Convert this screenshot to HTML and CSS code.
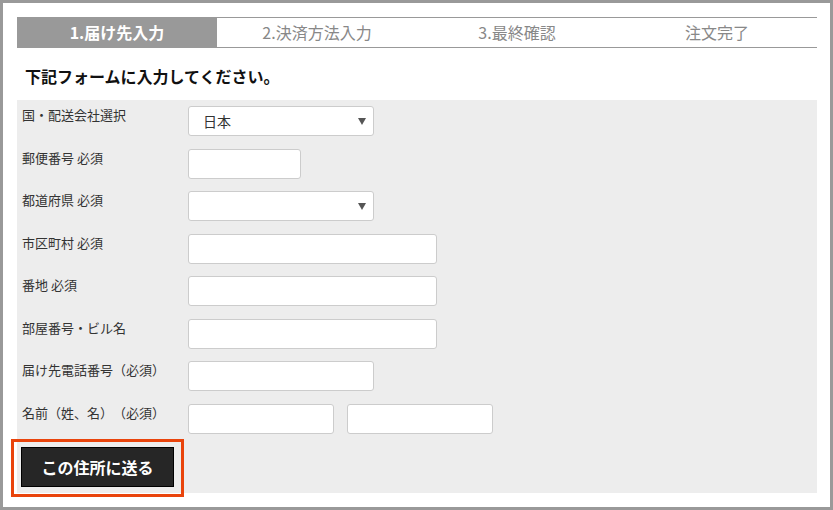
FILE: index.html
```html
<!DOCTYPE html>
<html lang="ja">
<head>
<meta charset="utf-8">
<title>届け先入力</title>
<link rel="stylesheet" href="styles.css">
</head>
<body>
<div class="frame">
  <ol class="steps">
    <li class="step is-active">1.届け先入力</li>
    <li class="step">2.決済方法入力</li>
    <li class="step">3.最終確認</li>
    <li class="step">注文完了</li>
  </ol>
  <h2 class="lead">下記フォームに入力してください。</h2>
  <form class="form">
    <div class="row">
      <label class="label">国・配送会社選択</label>
      <div class="field select w-186"><span class="value">日本</span><svg class="arrow" width="8" height="7" viewBox="0 0 8 7"><path d="M0 0H8L4 7Z" fill="#555"/></svg></div>
    </div>
    <div class="row">
      <label class="label">郵便番号 必須</label>
      <div class="field w-113"></div>
    </div>
    <div class="row">
      <label class="label">都道府県 必須</label>
      <div class="field select w-186"><span class="value"></span><svg class="arrow" width="8" height="7" viewBox="0 0 8 7"><path d="M0 0H8L4 7Z" fill="#555"/></svg></div>
    </div>
    <div class="row">
      <label class="label">市区町村 必須</label>
      <div class="field w-249"></div>
    </div>
    <div class="row">
      <label class="label">番地 必須</label>
      <div class="field w-249"></div>
    </div>
    <div class="row">
      <label class="label">部屋番号・ビル名</label>
      <div class="field w-249"></div>
    </div>
    <div class="row">
      <label class="label">届け先電話番号（必須）</label>
      <div class="field w-186"></div>
    </div>
    <div class="row">
      <label class="label">名前（姓、名）（必須）</label>
      <div class="pair">
        <div class="field w-146"></div>
        <div class="field w-146"></div>
      </div>
    </div>
    <div class="actions">
      <span class="highlight"><button type="button" class="submit">この住所に送る</button></span>
    </div>
  </form>
</div>
</body>
</html>
```
FILE: styles.css
```css
* { box-sizing: border-box; }
html, body { margin: 0; padding: 0; }
body {
  font-family: "Noto Sans CJK JP", "Noto Sans", sans-serif;
  color: #333;
  background: #fff;
  text-spacing-trim: space-all;
}
.frame {
  width: 833px;
  height: 510px;
  border: 3px solid #999;
  padding: 14px 13px 0 14px;
  background: #fff;
}
.steps {
  display: flex;
  margin: 0;
  padding: 0;
  list-style: none;
  border-top: 1px solid #999;
  border-bottom: 1px solid #999;
  height: 31px;
}
.step {
  width: 200px;
  text-align: center;
  font-size: 16px;
  line-height: 29px;
  color: #888;
}
.step.is-active {
  background: #999;
  color: #fff;
  font-weight: 700;
}
.lead {
  margin: 0;
  padding: 16px 0 12px 8px;
  font-size: 16px;
  line-height: 24px;
  font-weight: 700;
  color: #111;
}
.form {
  background: #ededed;
  padding: 6px 0 6px 0;
  display: flex;
  flex-direction: column;
  gap: 12.57px;
}
.row {
  display: flex;
  align-items: flex-start;
}
.label {
  width: 171px;
  padding-left: 5px;
  font-size: 13px;
  line-height: 18px;
  color: #333;
}
.field {
  height: 30px;
  background: #fff;
  border: 1px solid #ccc;
  border-radius: 3px;
}
.select {
  display: flex;
  align-items: center;
  justify-content: space-between;
  padding: 0 7px 0 14px;
}
.value {
  font-size: 14px;
  color: #333;
}
.arrow { display: block; }
.pair {
  display: flex;
  gap: 13px;
}
.w-113 { width: 113px; }
.w-146 { width: 146px; }
.w-186 { width: 186px; }
.w-249 { width: 249px; }
.actions {
  padding: 0.43px 0 0 4px;
}
.highlight {
  position: relative;
  display: inline-block;
  vertical-align: top;
}
.highlight::after {
  content: "";
  position: absolute;
  top: -8px;
  left: -10px;
  right: -10px;
  bottom: -10px;
  border: 3px solid #e9440c;
  pointer-events: none;
}
.submit {
  display: block;
  width: 153px;
  height: 40px;
  margin: 0;
  padding: 0;
  background: #262626;
  border: 1px solid #000;
  color: #fff;
  font-family: "Noto Sans CJK JP", "Noto Sans", sans-serif;
  font-size: 16px;
  font-weight: 700;
  line-height: 38px;
  text-align: center;
}
```
